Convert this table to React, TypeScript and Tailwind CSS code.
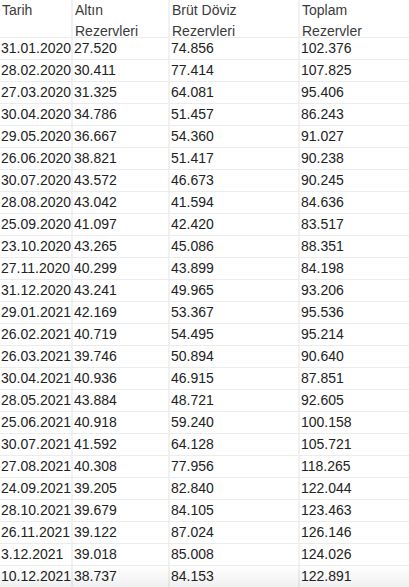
const rows: [string, string, string, string][] = [
  ['31.01.2020', '27.520', '74.856', '102.376'],
  ['28.02.2020', '30.411', '77.414', '107.825'],
  ['27.03.2020', '31.325', '64.081', '95.406'],
  ['30.04.2020', '34.786', '51.457', '86.243'],
  ['29.05.2020', '36.667', '54.360', '91.027'],
  ['26.06.2020', '38.821', '51.417', '90.238'],
  ['30.07.2020', '43.572', '46.673', '90.245'],
  ['28.08.2020', '43.042', '41.594', '84.636'],
  ['25.09.2020', '41.097', '42.420', '83.517'],
  ['23.10.2020', '43.265', '45.086', '88.351'],
  ['27.11.2020', '40.299', '43.899', '84.198'],
  ['31.12.2020', '43.241', '49.965', '93.206'],
  ['29.01.2021', '42.169', '53.367', '95.536'],
  ['26.02.2021', '40.719', '54.495', '95.214'],
  ['26.03.2021', '39.746', '50.894', '90.640'],
  ['30.04.2021', '40.936', '46.915', '87.851'],
  ['28.05.2021', '43.884', '48.721', '92.605'],
  ['25.06.2021', '40.918', '59.240', '100.158'],
  ['30.07.2021', '41.592', '64.128', '105.721'],
  ['27.08.2021', '40.308', '77.956', '118.265'],
  ['24.09.2021', '39.205', '82.840', '122.044'],
  ['28.10.2021', '39.679', '84.105', '123.463'],
  ['26.11.2021', '39.122', '87.024', '126.146'],
  ['3.12.2021', '39.018', '85.008', '124.026'],
  ['10.12.2021', '38.737', '84.153', '122.891'],
];

const headers = [
  ['Tarih', ''],
  ['Altın', 'Rezervleri'],
  ['Brüt Döviz', 'Rezervleri'],
  ['Toplam', 'Rezervler'],
];

export default function App() {
  return (
    <div className="relative w-[409px] h-[587px] overflow-hidden bg-white font-['Helvetica','Liberation_Sans',Arial,sans-serif] text-[14px]">
      <div className="grid grid-cols-[71px_97px_130px_111px] h-[38px] border-b border-[#ececec]">
        {headers.map((h, i) => (
          <div
            key={i}
            className={`px-[2px] text-[#3a3a3a] leading-[21px] ${i > 0 ? 'border-l-2 border-[#f1f1f1]' : ''}`}
          >
            <div>{h[0]}</div>
            {h[1] && <div>{h[1]}</div>}
          </div>
        ))}
      </div>
      {rows.map((r, ri) => (
        <div key={ri} className="grid grid-cols-[71px_97px_130px_111px] h-[22px] border-b border-[#ececec]">
          {r.map((c, ci) => (
            <div
              key={ci}
              className={`px-[1px] leading-[21px] text-[#222] whitespace-nowrap ${ci > 0 ? 'border-l-2 border-[#f1f1f1]' : ''}`}
            >
              {c}
            </div>
          ))}
        </div>
      ))}
      <div className="pointer-events-none absolute inset-x-0 bottom-0 h-[22px] bg-gradient-to-b from-transparent to-black/[0.06]" />
    </div>
  );
}
